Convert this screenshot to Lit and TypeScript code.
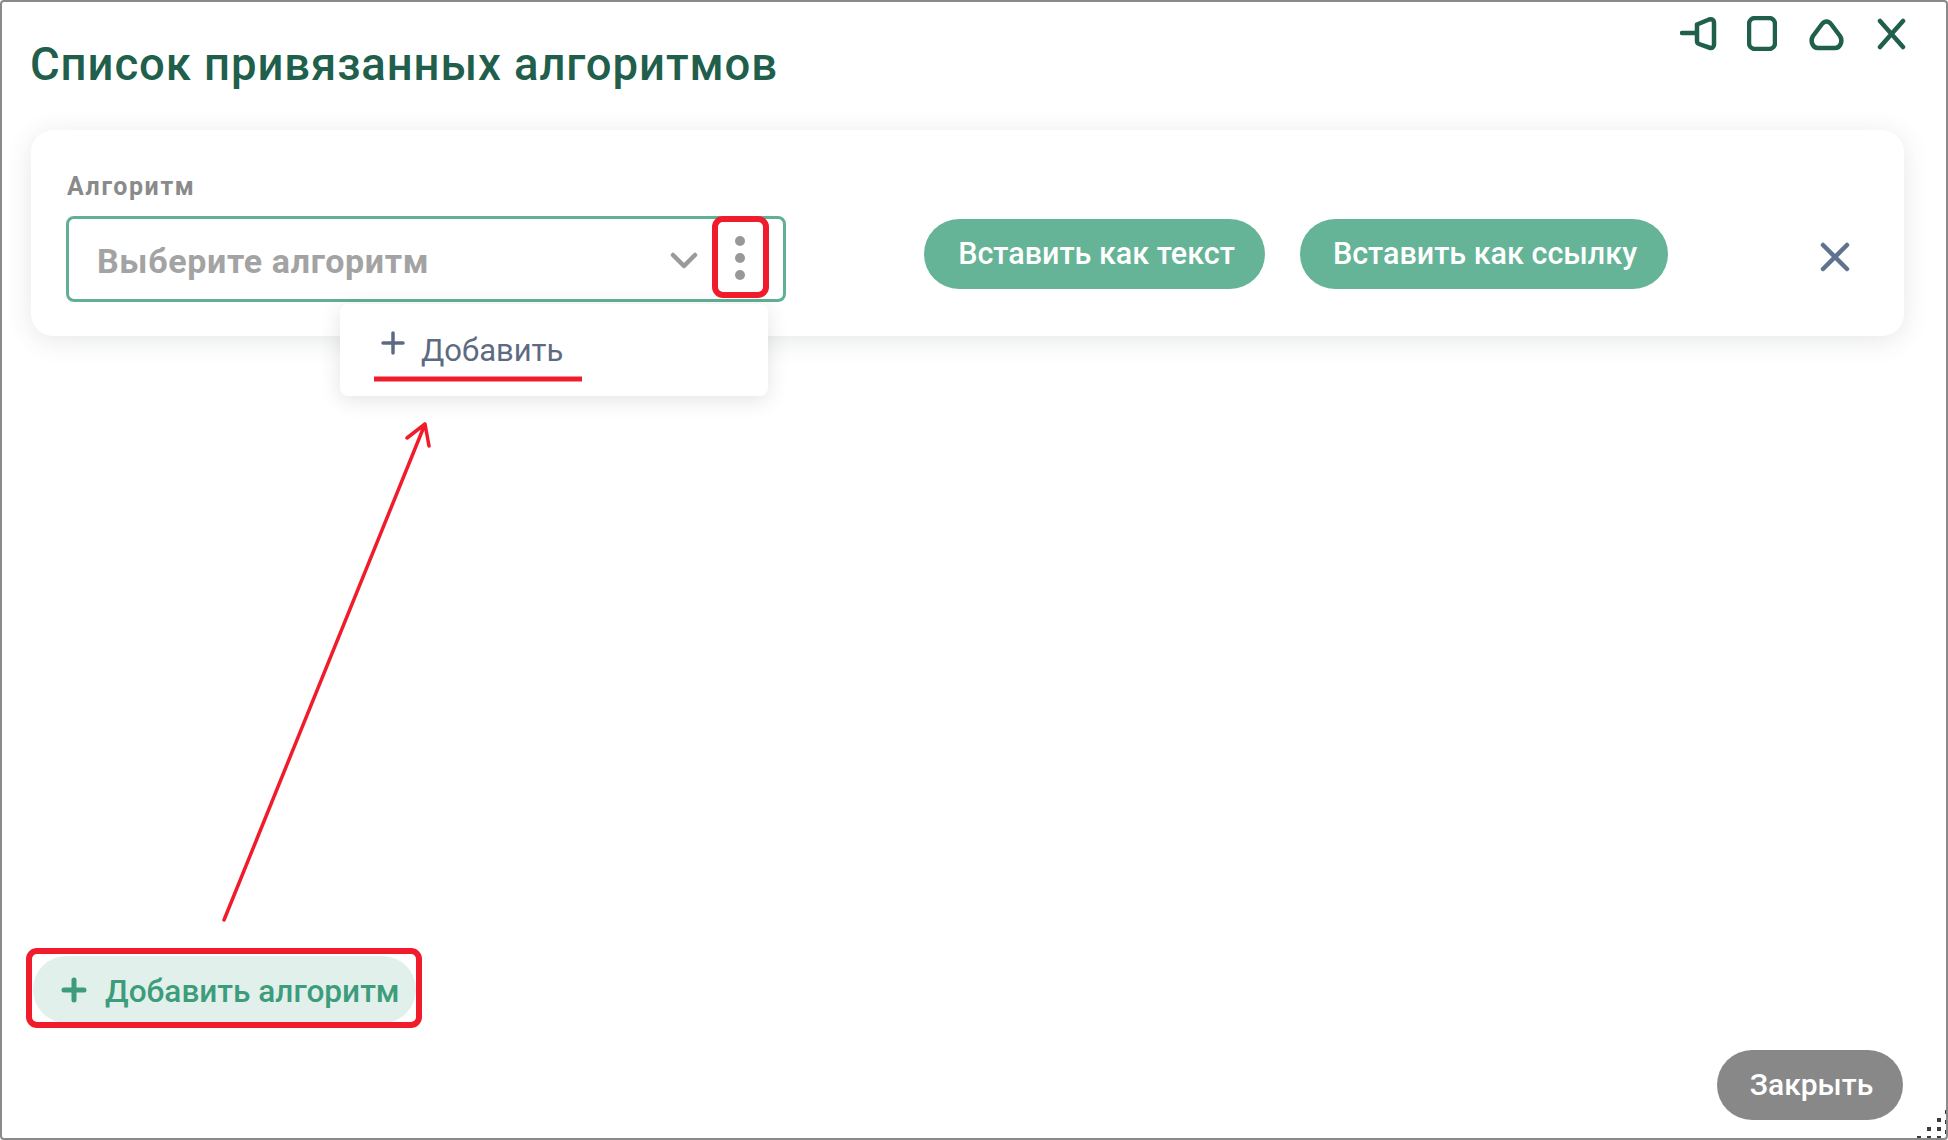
import { LitElement, html, css, svg } from "lit";
import { customElement } from "lit/decorators.js";

const dots = [[1937,1118],[1927,1127],[1937,1127],[1917,1136],[1927,1136],[1937,1136],[1945,1110],[1945,1120],[1945,1130]];

@customElement("app-root")
export class AppRoot extends LitElement {
  static styles = css`
    :host { display: block; width: 1948px; height: 1140px; font-family: Roboto, "Noto Sans", sans-serif; }
    * { box-sizing: border-box; }
    .window { position: relative; width: 1948px; height: 1140px; border: 2px solid #8a8a8a; border-radius: 4px; background: #fff;
      display: flex; flex-direction: column; overflow: hidden; padding: 0 43px 18px 28px; }
    .head { display: flex; justify-content: space-between; height: 128px; flex: none; }
    h1 { margin: 38px 0 0 0; font-size: 45.5px; line-height: 50px; font-weight: 500; color: #1f5f4c; letter-spacing: 0.9px; white-space: nowrap; }
    .wins { display: flex; gap: 30px; margin: 14px -3px 0 0; height: 35px; align-items: center; }
    .wins svg { display: block; fill: none; stroke: #1f5f4c; stroke-width: 4.5; stroke-linecap: round; stroke-linejoin: round; }
    .wins .tri { margin-left: 2px; }
    .wins .x { margin-left: 3px; }
    .card { position: relative; height: 206px; flex: none; margin: 0 -1px 0 1px; background: #fff; border-radius: 22px; box-shadow: 0 4px 26px rgba(60, 70, 80, 0.13); padding: 41px 35px 0; }
    label { display: block; font-size: 25px; line-height: 32px; font-weight: 700; letter-spacing: 1.6px; color: #8a8a8a; height: 45px; padding-left: 1px; }
    .row { display: flex; align-items: flex-start; }
    .select { width: 720px; height: 86px; border: 3px solid #5fb095; border-radius: 8px; display: flex; align-items: center; padding: 4px 0 0 28px; flex: none; }
    .select .ph { flex: 1; font-size: 34px; font-weight: 700; letter-spacing: 0.65px; color: #a3a3a3; white-space: nowrap; }
    .chev { fill: none; stroke: #9a9a9a; stroke-width: 4.5; stroke-linecap: round; stroke-linejoin: round; margin-right: 14px; display: block; }
    .more { width: 54px; height: 78px; margin: -6px 17px 0 0; display: flex; flex-direction: column; align-items: center; justify-content: center; gap: 7px; padding-left: 2px; }
    .more i { width: 10px; height: 10px; border-radius: 50%; background: #989898; display: block; }
    .btn { height: 70px; border: 0; border-radius: 36px; background: #65b497; color: #fff; font: 500 30.5px/1 Roboto, sans-serif; display: flex; align-items: center; justify-content: center; white-space: nowrap; flex: none; margin-top: 3px; }
    .b1 { width: 341px; margin-left: 138px; padding: 0 0 0 4px; }
    .b2 { width: 368px; margin-left: 35px; padding: 0 0 0 2px; }
    .rm { margin: 26px 0 0 152px; display: block; fill: none; stroke: #5d7390; stroke-width: 4.5; stroke-linecap: round; }
    .menu { position: absolute; left: 309px; top: 174px; width: 428px; height: 92px; background: #fff; border-radius: 8px; box-shadow: 0 4px 20px rgba(50, 60, 70, 0.14); display: flex; align-items: flex-start; padding: 27px 0 0 41px; gap: 16px; color: #5d6b82; font-size: 31px; line-height: 40px; z-index: 1; }
    .menu svg { display: block; stroke: #5d6b82; stroke-width: 3.5; stroke-linecap: round; fill: none; }
    .foot { margin-top: auto; display: flex; justify-content: space-between; align-items: flex-end; }
    .add { width: 383px; height: 67px; margin: 0 0 97px 3px; border-radius: 34px; background: #e2f0eb; color: #3d9c7c; display: flex; align-items: center; padding: 4px 0 0 28px; gap: 18px; font: 500 31.6px/1 Roboto, sans-serif; white-space: nowrap; }
    .add svg { display: block; stroke: #3d9c7c; stroke-width: 5; stroke-linecap: round; fill: none; margin-top: -4px; }
    .close { width: 186px; height: 70px; border-radius: 35px; background: #888888; color: #fff; font: 500 30px/1 Roboto, sans-serif; display: flex; align-items: center; justify-content: center; padding-left: 3px; }
    .notes { position: absolute; left: -2px; top: -2px; width: 1948px; height: 1140px; pointer-events: none; z-index: 2; }
    .notes .r { fill: none; stroke: #f01c2c; stroke-width: 6; }
    .notes .l { fill: none; stroke: #f01c2c; stroke-width: 3.5; stroke-linecap: round; stroke-linejoin: round; }
    .notes .u { stroke: #f01c2c; stroke-width: 5; }
    .notes .d { fill: #3b3b3b; }
  `;

  render() {
    return html`
      <div class="window">
        <div class="head">
          <h1>Список привязанных алгоритмов</h1>
          <div class="wins">
            <svg width="37" height="35" viewBox="0 0 37 35"><path d="M2 17h15M17 8.500 29 3.500c3-.8 5 .5 5 3v22c0 3-2 4-5 3L19 28c-1.500-.5-2-1.500-2-3V8.500"/></svg>
            <svg width="30" height="35" viewBox="0 0 30 35"><rect x="2" y="2" width="26" height="31" rx="6"/></svg>
            <svg class="tri" width="35" height="35" viewBox="0 0 35 35"><path d="M13 8c2.500-3.500 6.500-3.500 9 0l9 12c3 5 .5 12-5 12H9c-5.500 0-8-7-5-12z"/></svg>
            <svg class="x" width="29" height="35" viewBox="0 0 29 35"><path d="M3 5l23 26M26 5 3 31"/></svg>
          </div>
        </div>
        <div class="card">
          <label>Алгоритм</label>
          <div class="row">
            <div class="select">
              <span class="ph">Выберите алгоритм</span>
              <svg class="chev" width="28" height="18" viewBox="0 0 28 18"><path d="M3 3l11 11L25 3"/></svg>
              <div class="more"><i></i><i></i><i></i></div>
            </div>
            <div class="btn b1">Вставить как текст</div>
            <div class="btn b2">Вставить как ссылку</div>
            <svg class="rm" width="30" height="30" viewBox="0 0 30 30"><path d="M3 3l24 24M27 3 3 27"/></svg>
          </div>
          <div class="menu">
            <svg width="24" height="24" viewBox="0 0 24 24"><path d="M12 2v20M2 12h20"/></svg>
            <span>Добавить</span>
          </div>
        </div>
        <div class="foot">
          <div class="add">
            <svg width="26" height="26" viewBox="0 0 26 26"><path d="M13 3v20M3 13h20"/></svg>
            <span>Добавить алгоритм</span>
          </div>
          <div class="close">Закрыть</div>
        </div>
        <svg class="notes" viewBox="0 0 1948 1140">
          <rect class="r" x="715" y="219" width="51" height="76" rx="8"/>
          <rect class="r" x="29" y="951" width="390" height="74" rx="8"/>
          <line class="u" x1="374" y1="379" x2="582" y2="379"/>
          <path class="l" d="M224 920 425 424M407 438l18-14 4 22"/>
          ${dots.map(([x, y]) => svg`<rect class="d" x=${x} y=${y} width="4" height="4"/>`)}
        </svg>
      </div>
    `;
  }
}
